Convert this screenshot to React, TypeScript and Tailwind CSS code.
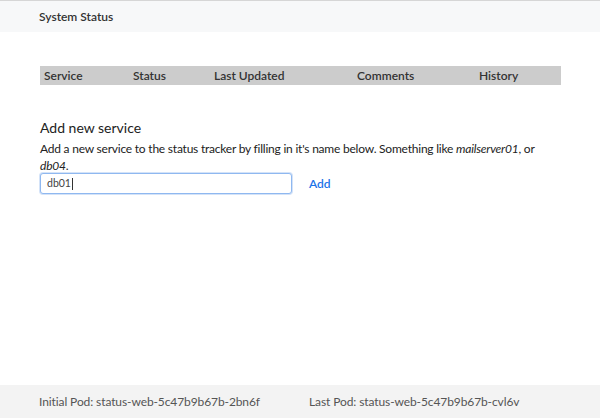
export default function App() {
  return (
    <div
      className="flex min-h-[418px] w-[600px] flex-col bg-white text-[#333]"
      style={{ fontFamily: 'Lato, "Noto Sans", sans-serif' }}
    >
      <header className="h-[32px] border-t border-[#d6d6d6] bg-[#f7f8f9] px-[39px] pt-[7px] text-[12px] font-semibold text-[#333]">
        System Status
      </header>
      <main className="flex-1 pl-[40px] pr-[39px] pt-[34px]">
        <div className="grid h-[19px] grid-cols-[89px_81px_143px_122px_1fr] items-center bg-[#cccccc] pl-[4px] text-[12px] font-semibold text-[#333]">
          <span>Service</span>
          <span>Status</span>
          <span>Last Updated</span>
          <span>Comments</span>
          <span>History</span>
        </div>
        <h2 className="mt-[34px] text-[14px] leading-[18px] text-[#222]">Add new service</h2>
        <p className="mt-[3px] text-[12px] leading-[17px] tracking-[-0.22px] text-[#222]">
          Add a new service to the status tracker by filling in it's name below. Something like{" "}
          <em>mailserver01</em>, or <em>db04</em>.
        </p>
        <div className="-mt-[1px] flex items-center">
          <div className="flex h-[21px] w-[252px] items-center rounded-[3px] border border-[#8fb8f0] bg-white px-[6px] text-[10.5px] text-[#444] shadow-[0_0_0_1px_#d4e3f8]">
            db01<span className="ml-[1px] inline-block h-[12px] w-px bg-[#333]" />
          </div>
          <span className="ml-[17px] text-[12px] font-semibold text-[#1a73e8]">Add</span>
        </div>
      </main>
      <footer className="flex h-[33px] items-center bg-[#f3f3f3] px-[39px] text-[12px] tracking-[-0.1px] text-[#555]">
        <span className="w-[270px]">Initial Pod: status-web-5c47b9b67b-2bn6f</span>
        <span>Last Pod: status-web-5c47b9b67b-cvl6v</span>
      </footer>
    </div>
  );
}
